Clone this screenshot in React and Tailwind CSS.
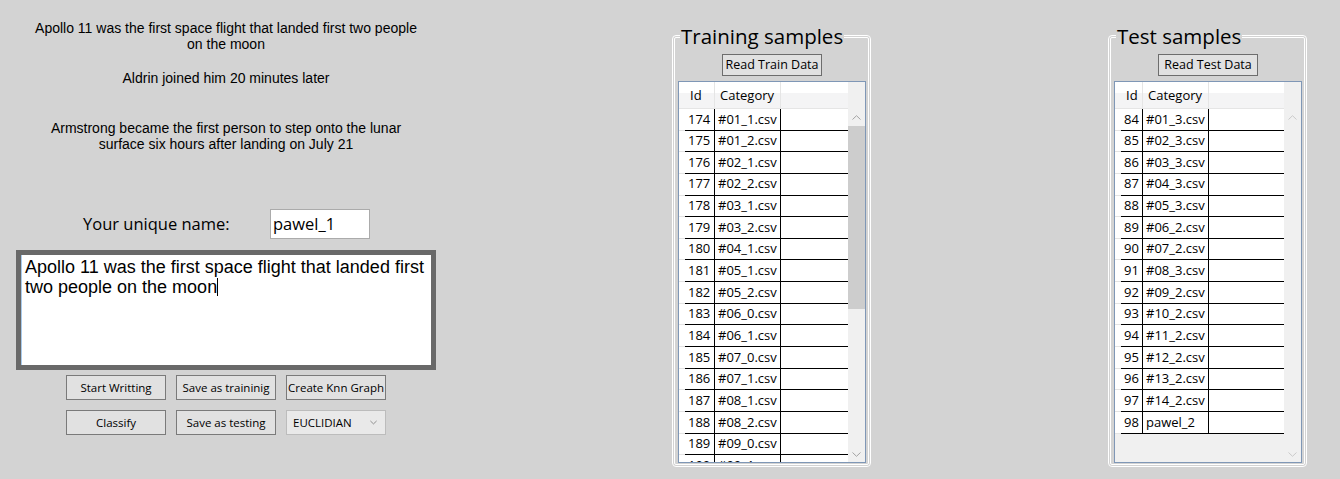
import React from 'react';

const trainRows = [
  ['174', '#01_1.csv'], ['175', '#01_2.csv'], ['176', '#02_1.csv'], ['177', '#02_2.csv'],
  ['178', '#03_1.csv'], ['179', '#03_2.csv'], ['180', '#04_1.csv'], ['181', '#05_1.csv'],
  ['182', '#05_2.csv'], ['183', '#06_0.csv'], ['184', '#06_1.csv'], ['185', '#07_0.csv'],
  ['186', '#07_1.csv'], ['187', '#08_1.csv'], ['188', '#08_2.csv'], ['189', '#09_0.csv'],
  ['190', '#09_1.csv'],
];

const testRows = [
  ['84', '#01_3.csv'], ['85', '#02_3.csv'], ['86', '#03_3.csv'], ['87', '#04_3.csv'],
  ['88', '#05_3.csv'], ['89', '#06_2.csv'], ['90', '#07_2.csv'], ['91', '#08_3.csv'],
  ['92', '#09_2.csv'], ['93', '#10_2.csv'], ['94', '#11_2.csv'], ['95', '#12_2.csv'],
  ['96', '#13_2.csv'], ['97', '#14_2.csv'], ['98', 'pawel_2'],
];

function Chevron({ up, className }) {
  return (
    <svg width="9" height="5" viewBox="0 0 9 5" className={className}>
      <path d={up ? 'M0.5 4.5L4.5 0.7L8.5 4.5' : 'M0.5 0.5L4.5 4.3L8.5 0.5'} fill="none" stroke="currentColor" strokeWidth="1" />
    </svg>
  );
}

function ScrollBar({ thumb }) {
  const arrow = thumb ? 'text-[#a3a3a3]' : 'text-[#cacaca]';
  return (
    <div className="w-[17px] shrink-0 flex flex-col bg-[#f0f0f0]">
      <div className="h-[27px] shrink-0" />
      <div className="h-[17px] shrink-0 flex items-center justify-center">
        <Chevron up className={arrow} />
      </div>
      {thumb && <div className="h-[183px] shrink-0 bg-[#cdcdcd]" />}
      <div className="flex-1" />
      <div className="h-[17px] shrink-0 flex items-center justify-center pt-[2px]">
        <Chevron className={arrow} />
      </div>
    </div>
  );
}

// DataGridView look-alike: row header strip, Id, Category, empty filler column, vertical scrollbar
function Grid({ rows, idCls, thumb }) {
  return (
    <div className="mt-[5px] w-[188px] h-[382px] border border-[#7f97b6] flex overflow-hidden bg-[#f0f0f0] text-[13px] text-black">
      <div className="flex-1 min-w-0 flex flex-col">
        <div className="h-[27px] shrink-0 flex border-b border-[#e5e5e5] bg-[linear-gradient(to_bottom,#ffffff_0%,#ffffff_42%,#f4f4f5_42%,#f4f4f5_100%)]">
          <div className="w-[6px] shrink-0" />
          <div className={`${idCls} shrink-0 border-r border-[#e5e5e5] pl-[5px] leading-[27px]`}>Id</div>
          <div className="w-[66px] shrink-0 border-r border-[#e5e5e5] pl-[5px] leading-[27px]">Category</div>
          <div className="flex-1" />
        </div>
        {rows.map(([id, cat]) => (
          <div key={id} className="h-[21.65px] shrink-0 flex">
            <div className="w-[6px] shrink-0 bg-white border-b border-[#e3e3e3]" />
            <div className={`${idCls} shrink-0 bg-white border-r border-b border-black pl-[3px] flex items-center`}>{id}</div>
            <div className="w-[66px] shrink-0 bg-white border-r border-b border-black pl-[3px] flex items-center">{cat}</div>
            <div className="flex-1 bg-white border-b border-black" />
          </div>
        ))}
      </div>
      <ScrollBar thumb={thumb} />
    </div>
  );
}

function GroupBox({ title, button, children, className }) {
  return (
    <fieldset className={`${className} w-[199px] border-[3px] border-double border-white rounded-[4px] pl-[3px] pr-[2px] pt-[4px] pb-[1px] flex flex-col items-center font-['Open_Sans','Noto_Sans',sans-serif]`}>
      <legend className="ml-[2px] px-[1px] text-[20.5px] leading-[27px] text-black">{title}</legend>
      <button className="w-[100px] h-[22px] border border-[#6d6d6d] bg-[#e1e1e1] text-[12.5px] leading-[20px] text-black">{button}</button>
      {children}
    </fieldset>
  );
}

function WinButton({ children }) {
  return (
    <button className="h-[25px] border border-[#7a7a7a] bg-[#e1e1e1] text-[11.5px] text-black font-['Open_Sans','Noto_Sans',sans-serif]">
      {children}
    </button>
  );
}

export default function App() {
  return (
    <div className="w-[1340px] h-[479px] bg-[#d3d3d3] flex items-start overflow-hidden">
      <div className="w-[452px] shrink-0 flex flex-col text-black font-['Liberation_Sans',Arial,sans-serif]">
        <p className="mt-[20px] text-center text-[14px] leading-[16px]">
          Apollo 11 was the first space flight that landed first two people<br />on the moon
        </p>
        <p className="mt-[18px] text-center text-[14px] leading-[16px]">Aldrin joined him 20 minutes later</p>
        <p className="mt-[34px] text-center text-[14px] leading-[16px]">
          Armstrong became the first person to step onto the lunar<br />surface six hours after landing on July 21
        </p>

        <div className="mt-[57px] h-[30px] flex items-center font-['Open_Sans','Noto_Sans',sans-serif]">
          <span className="ml-[83px] w-[187px] text-[16.5px] pt-[1px]">Your unique name:</span>
          <div className="w-[100px] h-[30px] border border-[#ababab] bg-white pl-[2px] text-[16.5px] leading-[28px]">pawel_1</div>
        </div>

        <div className="mt-[11px] ml-[16px] w-[420px] h-[120px] border-[5px] border-[#696969] bg-white">
          <div className="h-full border-l border-[#a9cbec] pl-[3px] pt-[2px] text-[18px] leading-[20px]">
            Apollo 11 was the first space flight that landed first two people on the moon
            <span className="inline-block w-px h-[18px] bg-black align-[-3px]" />
          </div>
        </div>

        <div className="mt-[5px] ml-[66px] grid grid-cols-[100px_100px_100px] gap-[10px]">
          <WinButton>Start Writting</WinButton>
          <WinButton>Save as traininig</WinButton>
          <WinButton>Create Knn Graph</WinButton>
          <WinButton>Classify</WinButton>
          <WinButton>Save as testing</WinButton>
          <div className="h-[25px] border border-[#bcbcbc] bg-[#e9e9e9] flex items-center justify-between pl-[6px] pr-[8px] text-[11.5px] font-['Open_Sans','Noto_Sans',sans-serif]">
            <span>EUCLIDIAN</span>
            <Chevron className="text-[#777777] w-[7px]" />
          </div>
        </div>
      </div>

      <GroupBox className="ml-[220px] mt-[23px]" title="Training samples" button="Read Train Data">
        <Grid rows={trainRows} idCls="w-[30px]" thumb />
      </GroupBox>

      <GroupBox className="ml-[237px] mt-[23px]" title="Test samples" button="Read Test Data">
        <Grid rows={testRows} idCls="w-[22px]" />
      </GroupBox>
    </div>
  );
}
